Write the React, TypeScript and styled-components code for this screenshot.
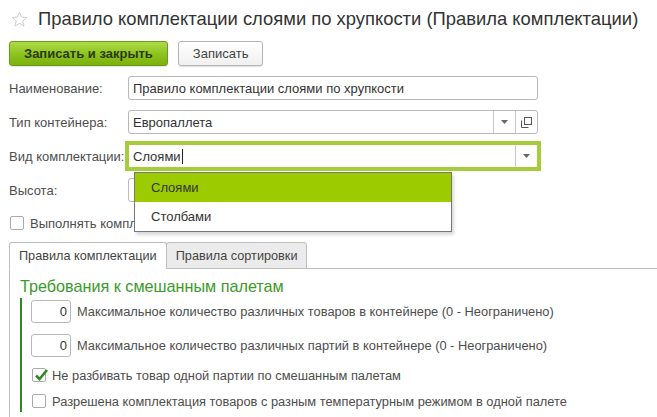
import styled, { createGlobalStyle } from "styled-components";

const GlobalStyle = createGlobalStyle`
  html, body {
    margin: 0;
    padding: 0;
    background: #fff;
  }
  body {
    font-family: "Liberation Sans", Arial, sans-serif;
    font-size: 13px;
    color: #4d4d4d;
  }
`;

const Page = styled.div`
  width: 657px;
  height: 417px;
  overflow: hidden;
  position: relative;
  padding: 6px 0 0 9px;
  box-sizing: border-box;
`;

const TitleBar = styled.div`
  display: flex;
  align-items: center;
  gap: 10px;
  height: 26px;
  margin-left: 2px;
  svg {
    width: 17px;
    height: 17px;
    flex: none;
  }
`;

const Title = styled.h1`
  margin: 0;
  font-size: 18.4px;
  font-weight: normal;
  color: #333;
  white-space: nowrap;
`;

const Toolbar = styled.div`
  display: flex;
  gap: 10px;
  margin-top: 9px;
`;

const Button = styled.button<{ $primary?: boolean }>`
  height: 25px;
  padding: 0 14px;
  border-radius: 3px;
  font-family: inherit;
  font-size: 13px;
  cursor: pointer;
  border: 1px solid ${({ $primary }) => ($primary ? "#6f9a14" : "#b4b4b4")};
  background: ${({ $primary }) =>
    $primary
      ? "linear-gradient(#aedb4a, #8cc21c 55%, #7bb10e)"
      : "linear-gradient(#ffffff, #f0f0f0)"};
  color: ${({ $primary }) => ($primary ? "#2b3b0a" : "#444")};
  font-weight: ${({ $primary }) => ($primary ? "bold" : "normal")};
  box-shadow: 0 1px 1px rgba(0, 0, 0, 0.12);
`;

const Form = styled.div`
  display: flex;
  flex-direction: column;
  margin-top: 10px;
  gap: 10px;
`;

const Row = styled.div`
  display: flex;
  align-items: center;
  height: 24px;
`;

const Label = styled.div`
  width: 119px;
  flex: none;
  white-space: nowrap;
  color: #4d4d4d;
`;

const Field = styled.div<{ $focused?: boolean; $width?: number }>`
  position: relative;
  display: flex;
  align-items: stretch;
  width: ${({ $width }) => $width ?? 410}px;
  height: 24px;
  box-sizing: border-box;
  border: 1px solid #b8b8b8;
  border-radius: 3px;
  background: #fff;
  outline: ${({ $focused }) => ($focused ? "3px solid #a5cc3a" : "none")};
  outline-offset: 0;
  ${({ $focused }) => ($focused ? "border-color: #a5cc3a; border-radius: 0;" : "")}
`;

const FieldText = styled.div`
  flex: 1;
  display: flex;
  align-items: center;
  padding-left: 4px;
  color: #333;
  white-space: nowrap;
  overflow: hidden;
`;

const Caret = styled.span`
  display: inline-block;
  width: 1px;
  height: 15px;
  background: #222;
  margin-left: 1px;
`;

const FieldButton = styled.div`
  width: 21px;
  flex: none;
  display: flex;
  align-items: center;
  justify-content: center;
  border-left: 1px solid #c8c8c8;
  svg {
    display: block;
  }
`;

const Dropdown = styled.div`
  position: absolute;
  left: 134px;
  top: 172px;
  width: 316px;
  border: 1px solid #777;
  background: #fff;
  box-shadow: 2px 3px 3px rgba(0, 0, 0, 0.15);
  z-index: 5;
`;

const Option = styled.div<{ $active?: boolean }>`
  height: 29px;
  display: flex;
  align-items: center;
  padding-left: 16px;
  background: ${({ $active }) => ($active ? "#9ccc00" : "#fff")};
  color: #333;
`;

const CheckRow = styled.div<{ $gap?: number }>`
  display: flex;
  align-items: center;
  gap: 6px;
  height: 22px;
  padding-left: 1px;
  margin-bottom: ${({ $gap }) => $gap ?? 0}px;
  white-space: nowrap;
`;

const Box = styled.span`
  width: 14px;
  height: 14px;
  flex: none;
  box-sizing: border-box;
  border: 1px solid #aaa;
  border-radius: 2px;
  background: #fff;
  position: relative;
  svg {
    position: absolute;
    left: 0;
    top: -2px;
  }
`;

const Tabs = styled.div`
  display: flex;
  margin-top: 8px;
  border-bottom: 1px solid #bdbdbd;
  height: 27px;
  box-sizing: border-box;
`;

const Tab = styled.div<{ $active?: boolean }>`
  height: 27px;
  box-sizing: border-box;
  padding: 0 9px;
  display: flex;
  align-items: center;
  font-size: 12.7px;
  border: 1px solid #bdbdbd;
  border-bottom: ${({ $active }) => ($active ? "1px solid #fff" : "1px solid #bdbdbd")};
  border-radius: 3px 3px 0 0;
  margin-right: -1px;
  background: ${({ $active }) => ($active ? "#fff" : "#ebebeb")};
  color: #444;
  white-space: nowrap;
`;

const Panel = styled.div`
  border-left: 1px solid #bdbdbd;
  padding: 8px 0 20px 10px;
`;

const GroupTitle = styled.div`
  color: #3a9a2a;
  font-size: 16.2px;
  line-height: 18px;
`;

const Group = styled.div`
  margin-top: 3px;
  border-left: 2px solid #2f8a23;
  padding: 2px 0 0 9px;
  display: flex;
  flex-direction: column;
  font-size: 12.85px;
`;

const NumberRow = styled.div<{ $gap?: number }>`
  display: flex;
  align-items: center;
  gap: 6px;
  height: 23px;
  margin-bottom: ${({ $gap }) => $gap ?? 0}px;
  white-space: nowrap;
`;

const NumberInput = styled.div`
  width: 40px;
  height: 23px;
  box-sizing: border-box;
  border: 1px solid #b8b8b8;
  border-radius: 3px;
  display: flex;
  align-items: center;
  justify-content: flex-end;
  padding-right: 3px;
  color: #333;
  font-size: 13px;
`;

const Star = () => (
  <svg viewBox="0 0 20 20">
    <path
      d="M10 1.5l2.5 5.6 6 .6-4.6 4 1.4 6-5.3-3.2-5.3 3.2 1.4-6-4.6-4 6-.6z"
      fill="#fff"
      stroke="#c9c9c9"
      strokeWidth="1.1"
      strokeLinejoin="round"
    />
  </svg>
);

const Arrow = () => (
  <svg width="7" height="4" viewBox="0 0 7 4">
    <path d="M0 0h7L3.5 4z" fill="#666" />
  </svg>
);

const OpenIcon = () => (
  <svg width="11" height="11" viewBox="0 0 11 11">
    <rect x="3.5" y="0.5" width="7" height="7" fill="none" stroke="#555" />
    <path d="M0.5 3.5v7h7" fill="none" stroke="#555" />
  </svg>
);

const Check = () => (
  <svg width="16" height="16" viewBox="0 0 16 16">
    <path d="M3 8.5l3.5 3.5L14 3" fill="none" stroke="#2f8a23" strokeWidth="2.6" />
  </svg>
);

export default function App() {
  return (
    <>
      <GlobalStyle />
      <Page>
        <TitleBar>
          <Star />
          <Title>Правило комплектации слоями по хрупкости (Правила комплектации)</Title>
        </TitleBar>
        <Toolbar>
          <Button $primary>Записать и закрыть</Button>
          <Button>Записать</Button>
        </Toolbar>
        <Form>
          <Row>
            <Label>Наименование:</Label>
            <Field>
              <FieldText>Правило комплектации слоями по хрупкости</FieldText>
            </Field>
          </Row>
          <Row>
            <Label>Тип контейнера:</Label>
            <Field>
              <FieldText>Европаллета</FieldText>
              <FieldButton>
                <Arrow />
              </FieldButton>
              <FieldButton>
                <OpenIcon />
              </FieldButton>
            </Field>
          </Row>
          <Row>
            <Label>Вид комплектации:</Label>
            <Field $focused>
              <FieldText>
                Слоями
                <Caret />
              </FieldText>
              <FieldButton>
                <Arrow />
              </FieldButton>
            </Field>
          </Row>
          <Row>
            <Label>Высота:</Label>
            <Field $width={80} />
          </Row>
          <CheckRow>
            <Box />
            Выполнять комплектацию
          </CheckRow>
        </Form>
        <Tabs>
          <Tab $active>Правила комплектации</Tab>
          <Tab>Правила сортировки</Tab>
        </Tabs>
        <Panel>
          <GroupTitle>Требования к смешанным палетам</GroupTitle>
          <Group>
            <NumberRow $gap={11}>
              <NumberInput>0</NumberInput>
              Максимальное количество различных товаров в контейнере (0 - Неограничено)
            </NumberRow>
            <NumberRow $gap={7}>
              <NumberInput>0</NumberInput>
              Максимальное количество различных партий в контейнере (0 - Неограничено)
            </NumberRow>
            <CheckRow $gap={4}>
              <Box>
                <Check />
              </Box>
              Не разбивать товар одной партии по смешанным палетам
            </CheckRow>
            <CheckRow>
              <Box />
              Разрешена комплектация товаров с разным температурным режимом в одной палете
            </CheckRow>
          </Group>
        </Panel>
        <Dropdown>
          <Option $active>Слоями</Option>
          <Option>Столбами</Option>
        </Dropdown>
      </Page>
    </>
  );
}
